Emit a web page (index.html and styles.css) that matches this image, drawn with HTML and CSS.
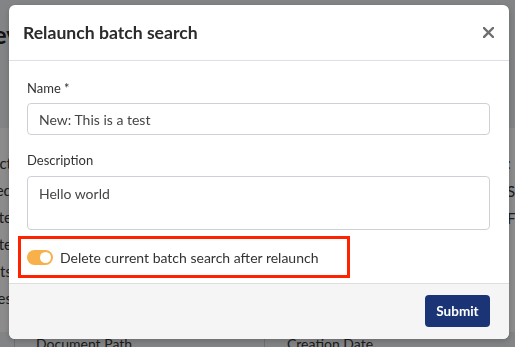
FILE: index.html
```html
<!DOCTYPE html>
<html lang="en">
<head>
    <meta charset="UTF-8">
    <meta name="viewport" content="width=device-width, initial-scale=1.0">
    <title>Relaunch batch search</title>
    <link rel="stylesheet" href="styles.css">
</head>
<body>
    <!-- page behind the dialog -->
    <div class="page">
        <div class="page-head">
            <div class="clip-left head-clip"><span class="page-title">Rev</span></div>
        </div>
        <div class="page-card">
            <div class="card-col clip-left">
                <div class="cell">Project</div>
                <div class="cell">Published</div>
                <div class="cell">State</div>
                <div class="cell">Date</div>
                <div class="cell">Results</div>
                <div class="cell">Queries</div>
            </div>
            <div class="card-col card-right">
                <div class="cell">: I</div>
                <div class="cell">S</div>
                <div class="cell">F</div>
            </div>
        </div>
        <div class="page-foot">
            <span class="foot-col">Document Path</span>
            <span class="foot-col foot-col-2">Creation Date</span>
        </div>
    </div>

    <div class="overlay"></div>

    <div class="modal">
        <div class="modal-header">
            <h2 class="modal-title">Relaunch batch search</h2>
            <button class="close" type="button" aria-label="Close">
                <svg width="11" height="11" viewBox="0 0 11 11"><path d="M1 1L10 10M10 1L1 10" stroke="#6f6f6f" stroke-width="2.4" stroke-linecap="square"/></svg>
            </button>
        </div>
        <div class="modal-body">
            <label class="field-label" for="name">Name *</label>
            <input class="field" id="name" type="text" value="New: This is a test">
            <label class="field-label field-gap" for="desc">Description</label>
            <textarea class="field field-area" id="desc">Hello world</textarea>
            <div class="toggle-row">
                <span class="toggle"><span class="knob"></span></span>
                <span class="toggle-label">Delete current batch search after relaunch</span>
            </div>
        </div>
        <div class="modal-footer">
            <button class="submit" type="button">Submit</button>
        </div>
    </div>
</body>
</html>
```

FILE: styles.css
```css
body {
    margin: 0;
    font-family: Lato, "Open Sans", Arial, sans-serif;
    background-color: #eef0f2;
    color: #333;
    width: 515px;
    height: 347px;
    overflow: hidden;
}

/* background page */
.page {
    display: flex;
    flex-direction: column;
}
.page-head {
    height: 128px;
    display: flex;
}
.clip-left {
    width: 12px;
    display: flex;
    flex-direction: column;
    align-items: flex-end;
    overflow: hidden;
    white-space: nowrap;
}
.head-clip {
    width: 19px;
}
.page-title {
    margin-top: 20px;
    font-size: 24px;
    font-weight: bold;
    color: #222;
}
.page-card {
    background: #fff;
    height: 204px;
    display: flex;
    justify-content: space-between;
    padding-top: 22px;
    box-sizing: border-box;
}
.card-col {
    display: flex;
    flex-direction: column;
}
.card-right {
    width: 8px;
    overflow: hidden;
    white-space: nowrap;
}
.cell {
    height: 27px;
    line-height: 27px;
    font-size: 15px;
    color: #333;
}
.card-right .cell {
    height: 27.5px;
}
.page-foot {
    display: flex;
    font-size: 14px;
    line-height: 16px;
    color: #333;
    margin-top: 4px;
}
.foot-col {
    width: 232px;
    padding-left: 21px;
    border-left: 1px solid #ccc;
    margin-left: 14px;
}
.foot-col-2 {
    margin-left: 0;
    padding-left: 22px;
}

.overlay {
    position: fixed;
    inset: 0;
    background: rgba(0, 0, 0, 0.45);
}

/* dialog */
.modal {
    position: fixed;
    left: 9px;
    top: 5px;
    width: 500px;
    background: #fff;
    border-radius: 6px;
    box-shadow: 0 2px 6px rgba(0,0,0,0.2);
}
.modal-header {
    height: 55px;
    display: flex;
    align-items: center;
    justify-content: space-between;
    padding: 0 15px 0 14px;
    border-bottom: 1px solid #dcdfe3;
}
.modal-title {
    margin: 0;
    font-size: 17.6px;
    font-weight: bold;
    color: #2b2b2b;
}
.close {
    background: none;
    border: none;
    padding: 0;
    width: 11px;
    height: 11px;
    display: flex;
    cursor: pointer;
}
.modal-body {
    padding: 17px 19px 5px 18px;
    display: flex;
    flex-direction: column;
}
.field-label {
    font-size: 13px;
    line-height: 20px;
    color: #333;
    margin-bottom: 5px;
}
.field-gap {
    margin-top: 15px;
    margin-bottom: 6px;
}
.field {
    height: 32px;
    box-sizing: border-box;
    border: 1px solid #cdd1d6;
    border-radius: 4px;
    padding: 0 11px;
    font-family: inherit;
    font-size: 14px;
    color: #454545;
    background: #fff;
}
.field-area {
    height: 54px;
    padding: 7px 11px;
    resize: none;
    line-height: 20px;
}
.toggle-row {
    margin-top: 6px;
    margin-left: -9px;
    width: 332px;
    height: 42px;
    box-sizing: border-box;
    border: 3px solid #ff2200;
    display: flex;
    align-items: center;
    gap: 7px;
    padding-left: 6px;
}
.toggle {
    width: 26px;
    height: 15px;
    border-radius: 8px;
    background: #f7b04a;
    display: flex;
    align-items: center;
    justify-content: flex-end;
    padding-right: 2px;
    box-sizing: border-box;
}
.knob {
    width: 11px;
    height: 11px;
    border-radius: 50%;
    background: #fff;
}
.toggle-label {
    font-size: 14px;
    color: #333;
}
.modal-footer {
    background: #f5f5f5;
    border-top: 1px solid #dedede;
    border-radius: 0 0 6px 6px;
    padding: 11px 19px 12px 0;
    display: flex;
    justify-content: flex-end;
}
.submit {
    width: 65px;
    height: 32px;
    border: none;
    border-radius: 4px;
    background: #1b3476;
    color: #fff;
    font-family: inherit;
    font-weight: bold;
    font-size: 13.5px;
    cursor: pointer;
}
```
